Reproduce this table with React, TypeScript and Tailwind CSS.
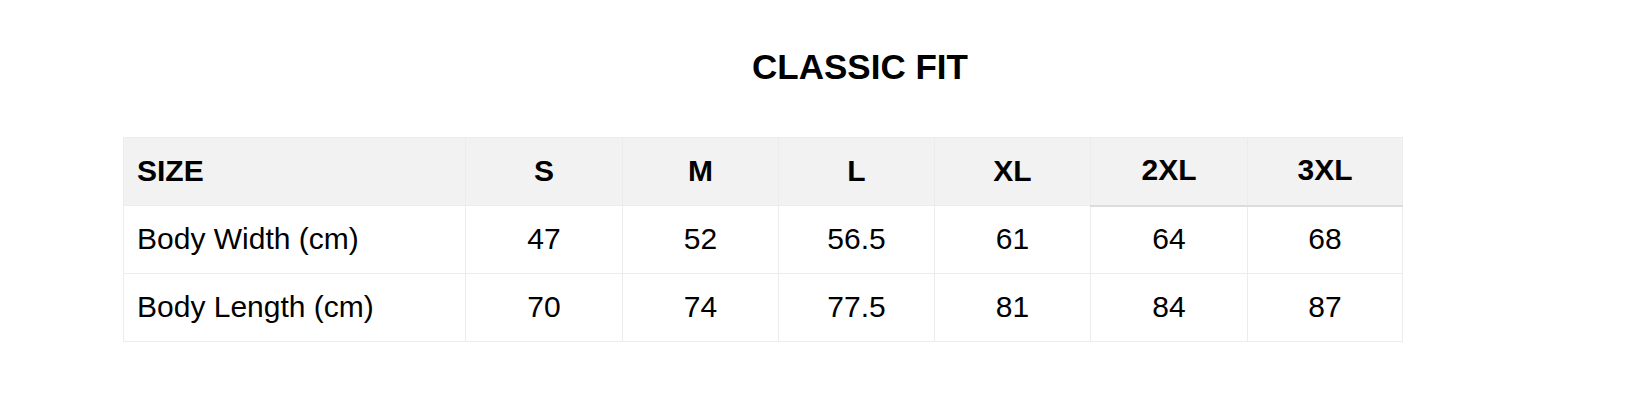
import React from 'react';

const sizes = ['S', 'M', 'L', 'XL', '2XL', '3XL'];

const rows = [
  { label: 'Body Width (cm)', values: ['47', '52', '56.5', '61', '64', '68'] },
  { label: 'Body Length (cm)', values: ['70', '74', '77.5', '81', '84', '87'] },
];

export default function App() {
  return (
    <div className="min-h-[408px] w-[1630px] bg-white text-black font-['Liberation_Sans',Arial,sans-serif]">
      {/* titre */}
      <div className="pl-[90px] pt-[47px] text-center">
        <h2 className="text-[35px] font-bold leading-[40px]">CLASSIC FIT</h2>
      </div>

      <div className="pl-[123px] pt-[50px]">
        <table className="w-[1279px] table-fixed border-collapse text-[30px]">
          <colgroup>
            <col className="w-[342px]" />
            <col className="w-[157px]" />
            <col className="w-[156px]" />
            <col className="w-[156px]" />
            <col className="w-[156px]" />
            <col className="w-[157px]" />
            <col className="w-[155px]" />
          </colgroup>
          <thead>
            <tr className="h-[68px] bg-[#f2f2f2]">
              <th className="border border-[#ececec] pb-[3px] pl-[13px] text-left font-bold">SIZE</th>
              {sizes.map((s, i) => (
                <th
                  key={s}
                  className={
                    i >= 4
                      ? 'border border-[#ececec] border-b-2 border-b-[#dcdcdc] pb-[3px] text-center font-bold'
                      : 'border border-[#ececec] pb-[3px] text-center font-bold'
                  }
                >
                  {s}
                </th>
              ))}
            </tr>
          </thead>
          <tbody>
            {rows.map((r) => (
              <tr key={r.label} className="h-[68px]">
                <td className="border border-[#ececec] pb-[3px] pl-[13px] text-left">{r.label}</td>
                {r.values.map((v, i) => (
                  <td key={i} className="border border-[#ececec] pb-[3px] text-center">
                    {v}
                  </td>
                ))}
              </tr>
            ))}
          </tbody>
        </table>
      </div>
    </div>
  );
}
